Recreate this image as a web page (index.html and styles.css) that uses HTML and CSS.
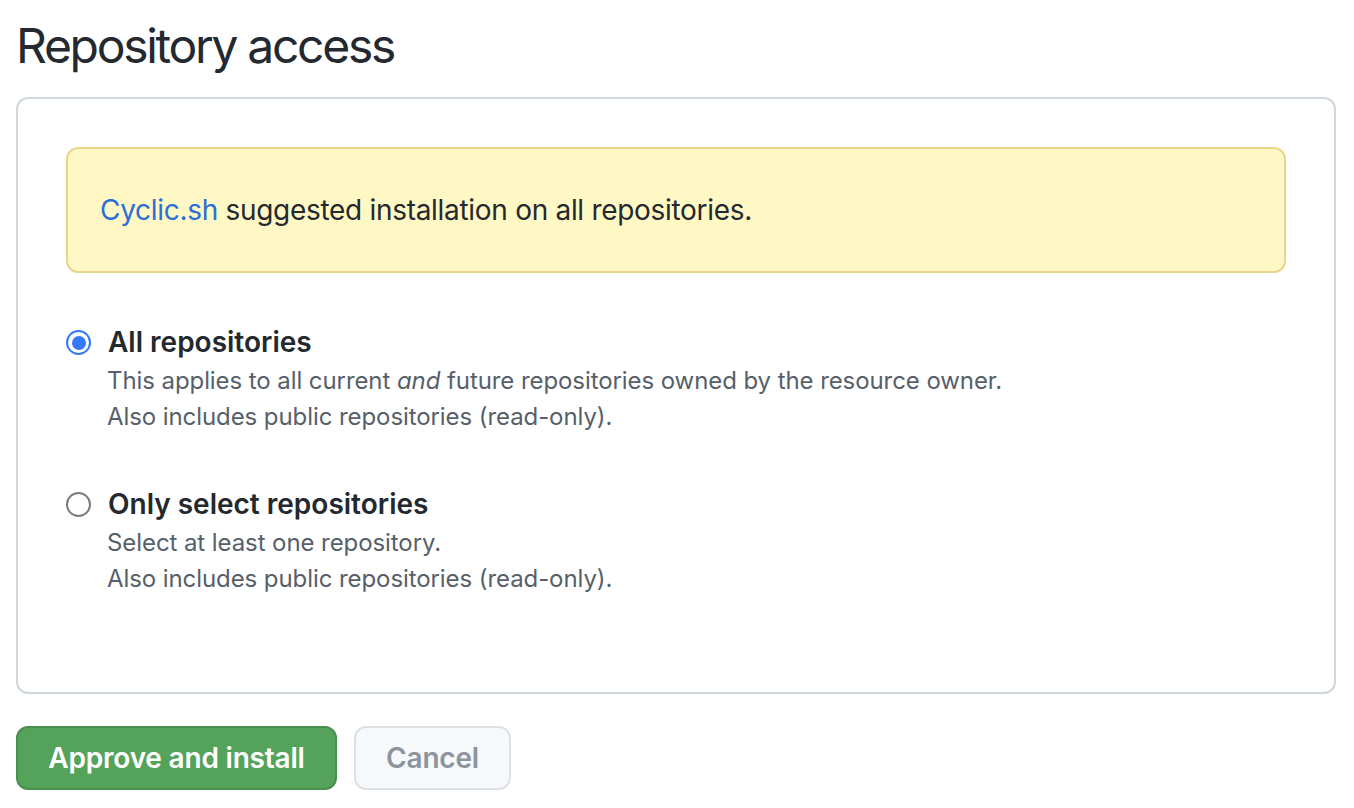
FILE: index.html
```html
<!DOCTYPE html>
<html lang="en">
<head>
<meta charset="utf-8">
<title>Repository access</title>
<link rel="stylesheet" href="styles.css">
</head>
<body>
<main class="page">
  <h2 class="title">Repository access</h2>
  <section class="box">
    <div class="flash"><a class="link" href="#">Cyclic.sh</a> suggested installation on all repositories.</div>
    <div class="option">
      <span class="radio radio-on"></span>
      <div class="option-body">
        <div class="label">All repositories</div>
        <p class="note">This applies to all current <em>and</em> future repositories owned by the resource owner.</p>
        <p class="note">Also includes public repositories (read-only).</p>
      </div>
    </div>
    <div class="option">
      <span class="radio"></span>
      <div class="option-body">
        <div class="label">Only select repositories</div>
        <p class="note">Select at least one repository.</p>
        <p class="note">Also includes public repositories (read-only).</p>
      </div>
    </div>
  </section>
  <div class="actions">
    <button class="btn btn-primary" type="button">Approve and install</button>
    <button class="btn btn-cancel" type="button">Cancel</button>
  </div>
</main>
</body>
</html>
```
FILE: styles.css
```css
* { box-sizing: border-box; }
html, body { margin: 0; padding: 0; background: #ffffff; }
body {
  font-family: Inter, "Liberation Sans", Arial, sans-serif;
  color: #24292f;
}
.page { padding: 16px 18px 0 16px; }
.title {
  margin: 0 0 21px 0;
  font-size: 48px;
  line-height: 60px;
  font-weight: 400;
  letter-spacing: -2.3px;
  color: #24292f;
}
.box {
  border: 2px solid #d0d7de;
  border-radius: 12px;
  padding: 48px 48px 95px 48px;
}
.flash {
  background: #fff8c5;
  border: 2px solid #ead58a;
  border-radius: 12px;
  padding: 40px 32px;
  font-size: 28px;
  line-height: 42px;
  letter-spacing: -0.3px;
  color: #24292f;
}
.link { color: #2a6fd8; text-decoration: none; }
.option {
  display: grid;
  grid-template-columns: 41px 1fr;
  margin-top: 48px;
}
.radio {
  width: 25px;
  height: 25px;
  margin-top: 9px;
  border-radius: 50%;
  border: 2px solid #7b7b7b;
  background: #fff;
  display: flex;
  align-items: center;
  justify-content: center;
}
.radio-on { border: 2.5px solid #3478f6; }
.radio-on::after {
  content: "";
  width: 14px;
  height: 14px;
  border-radius: 50%;
  background: #3478f6;
}
.label {
  font-size: 28px;
  line-height: 42px;
  font-weight: 600;
  color: #24292f;
  padding-left: 1px;
}
.note {
  margin: 0;
  font-size: 24px;
  line-height: 36px;
  letter-spacing: -0.08px;
  color: #57606a;
}
.actions {
  display: flex;
  gap: 17px;
  margin-top: 32px;
}
.btn {
  font-family: Inter, "Liberation Sans", Arial, sans-serif;
  height: 64px;
  padding: 0;
  border-radius: 12px;
  font-size: 28px;
  font-weight: 600;
  letter-spacing: -0.2px;
  white-space: nowrap;
  cursor: pointer;
}
.btn-primary {
  width: 321px;
  background: #55a35a;
  border: 2px solid #4a8f50;
  color: #ffffff;
}
.btn-cancel {
  width: 157px;
  background: #f6f8fa;
  border: 2px solid #dde1e5;
  color: #8c959f;
}
```
